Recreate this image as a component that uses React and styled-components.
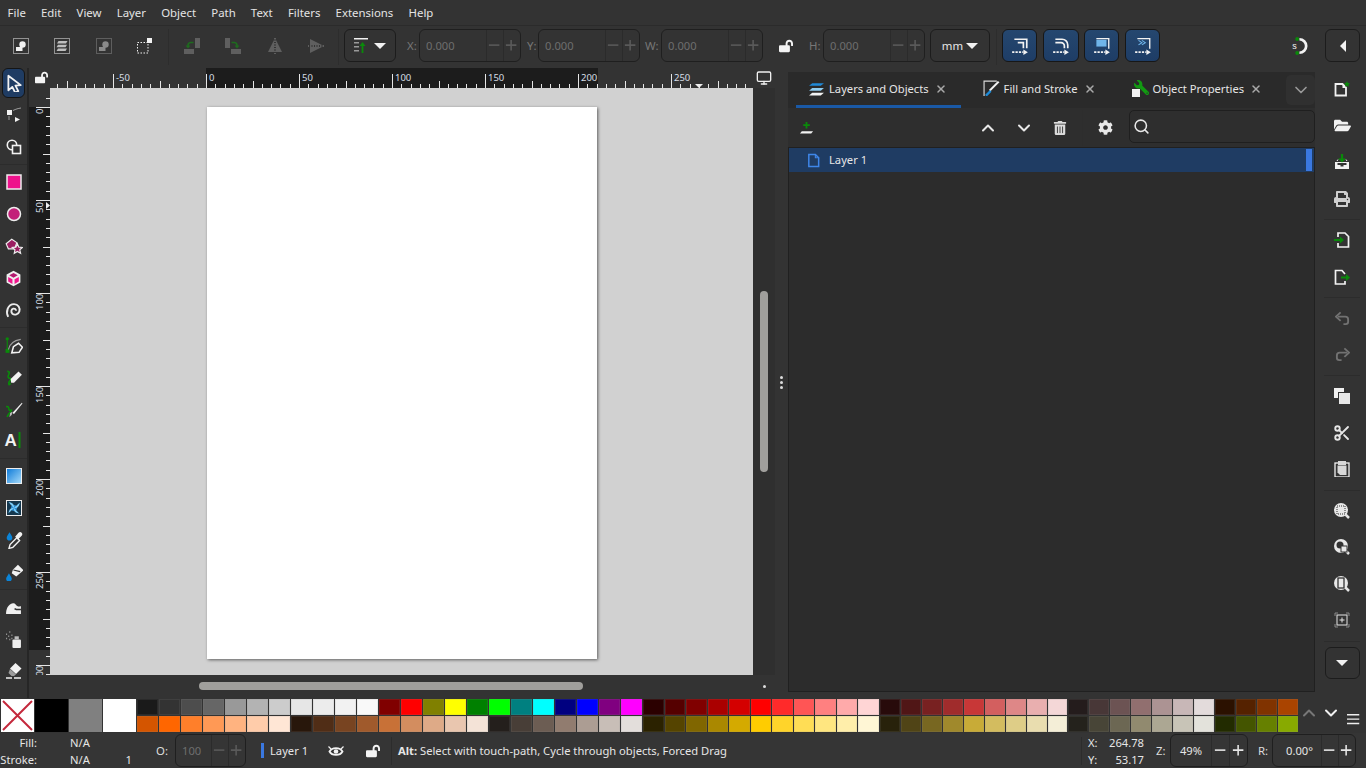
import React from 'react';
import styled, { createGlobalStyle } from 'styled-components';
import { FaCog, FaFolderOpen, FaLockOpen, FaPrint, FaTrashAlt, FaWrench } from 'react-icons/fa';
import { Monitor, Search, Scissors, ChevronUp, ChevronDown, X as XIcon } from 'lucide-react';

const W = '#f2f2f2';
const GREEN = '#0a8a0a';
const FONT = '"Noto Sans", "Open Sans", sans-serif';

const GlobalStyle = createGlobalStyle`
  html, body { margin: 0; padding: 0; background: #333; }
  body { font-family: ${FONT}; font-size: 12px; color: #e6e6e6; overflow: hidden; }
  * { box-sizing: border-box; }
`;

const Page = styled.div`
  width: 1366px;
  height: 768px;
  display: flex;
  flex-direction: column;
  background: #333;
  overflow: hidden;
`;

/* ---------- menu ---------- */
const MenuBar = styled.div`
  height: 26px;
  display: flex;
  align-items: center;
  padding: 0 0 1px 0;
  border-bottom: 1px solid #2b2b2b;
`;
const MenuItem = styled.span`
  padding: 0 7.6px;
  font-size: 11.4px;
  color: #e4e4e4;
`;

/* ---------- command bar ---------- */
const CommandBar = styled.div`
  height: 42px;
  display: flex;
  align-items: flex-start;
  padding-top: 3px;
`;
const BarBtn = styled.div`
  width: ${p => p.$w || 41.5}px;
  height: 33px;
  flex: none;
  display: flex;
  align-items: center;
  justify-content: center;
`;
const VSep = styled.div`
  width: 1px;
  height: 36px;
  flex: none;
  margin: ${p => p.$m || '0 1px'};
  background: #2d2d2d;
`;
const Field = styled.div`
  display: flex;
  align-items: center;
  height: 33px;
  flex: none;
  margin-left: ${p => p.$ml || 0}px;
`;
const FieldLabel = styled.span`
  width: ${p => p.$w}px;
  padding-left: ${p => p.$pl || 0}px;
  font-size: 11.4px;
  color: ${p => (p.$off ? '#777' : '#ddd')};
`;
const Spin = styled.div`
  width: ${p => p.$w}px;
  height: 33px;
  display: flex;
  align-items: stretch;
  border: 1px solid #1f1f1f;
  border-radius: 6px;
  color: ${p => (p.$off ? '#6e6e6e' : '#e6e6e6')};
`;
const SpinValue = styled.div`
  flex: 1;
  display: flex;
  align-items: center;
  justify-content: ${p => p.$align || 'flex-start'};
  padding: ${p => p.$pad || '0 0 0 6px'};
  font-size: 11.2px;
`;
const SpinStep = styled.div`
  width: ${p => p.$w || 17}px;
  border-left: 1px solid #2b2b2b;
  display: flex;
  align-items: center;
  justify-content: center;
  font-size: 0;
`;
const DropBtn = styled.div`
  width: ${p => p.$w}px;
  height: 33px;
  flex: none;
  margin-left: ${p => p.$ml || 0}px;
  margin-right: ${p => p.$mr || 0}px;
  display: flex;
  align-items: center;
  justify-content: center;
  gap: ${p => p.$gap || 3}px;
  border: 1px solid #1c1c1c;
  border-radius: 6px;
  font-size: 11.4px;
  color: #e6e6e6;
`;
const BlueBtn = styled.div`
  width: ${p => p.$w || 35}px;
  height: 33px;
  flex: none;
  margin-left: ${p => p.$ml || 6}px;
  display: flex;
  align-items: center;
  justify-content: center;
  border: 1px solid #171717;
  border-radius: 6px;
  background: linear-gradient(#25476f, #1e3d66);
`;
const Caret = styled.span`
  width: 0;
  height: 0;
  border-left: 6px solid transparent;
  border-right: 6px solid transparent;
  border-top: 6px solid #f2f2f2;
`;
const SideCaret = styled.span`
  width: 0;
  height: 0;
  border-top: 6px solid transparent;
  border-bottom: 6px solid transparent;
  border-right: 6px solid #f2f2f2;
`;
const Push = styled.div`
  margin-left: auto;
  display: flex;
  align-items: center;
  flex: none;
`;

/* ---------- middle ---------- */
const Middle = styled.div`
  height: 630px;
  display: flex;
`;
const LeftTools = styled.div`
  width: 29px;
  flex: none;
  display: flex;
  flex-direction: column;
  border-right: 2px solid #262626;
`;
const ToolSlot = styled.div`
  height: 32px;
  flex: none;
  display: flex;
  align-items: center;
  justify-content: center;
`;
const ActiveTool = styled(ToolSlot)`
  height: 30px;
  margin: 0 2px 1px 2px;
  border: 1px solid #151515;
  border-radius: 6px;
  background: #1f3c63;
`;
const ToolSep = styled.div`
  height: 1px;
  flex: none;
  margin: 1px 0;
  background: #2c2c2c;
`;
const CanvasArea = styled.div`
  display: grid;
  grid-template-columns: 21px 703px 22px;
  grid-template-rows: 20px 587px 23px;
  flex: none;
`;
const Corner = styled.div`
  display: flex;
  align-items: flex-start;
  justify-content: flex-end;
  padding: 3px 2px 0 0;
`;
const RulerSvg = styled.svg`
  display: block;
  font-family: ${FONT};
`;
const CanvasView = styled.div`
  background: #d1d1d1;
  overflow: hidden;
  padding: 19px 0 0 157px;
`;
const SheetPage = styled.div`
  width: 390px;
  height: 552px;
  background: #fff;
  box-shadow: 1px 1px 3px rgba(0, 0, 0, 0.55);
`;
const VScrollTop = styled.div`
  display: flex;
  align-items: center;
  justify-content: center;
  padding-bottom: 1px;
`;
const VScroll = styled.div`
  background: #2f2f2f;
  padding: 203px 7px 0 7px;
`;
const Thumb = styled.div`
  background: #a09f9c;
  border-radius: 4px;
  width: 8px;
  height: 181px;
`;
const HScroll = styled.div`
  padding: 7px 0 0 149px;
`;
const HThumb = styled.div`
  background: #a09f9c;
  border-radius: 4px;
  width: 384px;
  height: 8px;
`;
const ScrollCorner = styled.div`
  display: flex;
  justify-content: center;
  padding-top: 10px;
`;
const Dot = styled.div`
  width: 3px;
  height: 3px;
  border-radius: 2px;
  background: #ddd;
`;
const Handle = styled.div`
  width: 13px;
  flex: none;
  display: flex;
  flex-direction: column;
  align-items: center;
  justify-content: center;
  gap: 2px;
  margin-top: -1px;
`;

/* ---------- dock ---------- */
const Dock = styled.div`
  width: 527px;
  flex: none;
  height: 624px;
  padding-top: 4px;
  display: flex;
  flex-direction: column;
`;
const TabBar = styled.div`
  height: 36px;
  flex: none;
  display: flex;
  align-items: stretch;
  gap: 10px;
  padding-left: 8px;
  background: #2a2a2a;
`;
const Tab = styled.div`
  display: flex;
  flex: none;
  align-items: center;
  gap: 4px;
  padding: 0 14px 0 12px;
  height: 36px;
  font-size: 11.2px;
  white-space: nowrap;
  color: #e6e6e6;
  border-bottom: 3px solid ${p => (p.$active ? '#1a59a6' : 'transparent')};
`;
const TabClose = styled.span`
  display: flex;
  margin-left: 2px;
  color: #a9a9a9;
`;
const TabMore = styled.div`
  margin: 3px 0 3px auto;
  width: 30px;
  height: 30px;
  border-radius: 5px;
  background: #303030;
  display: flex;
  align-items: center;
  justify-content: center;
  color: #9a9a9a;
`;
const DockTools = styled.div`
  height: 39px;
  flex: none;
  display: flex;
  align-items: center;
  background: #2e2e2e;
`;
const DockBtn = styled.div`
  width: 36px;
  height: 36px;
  flex: none;
  margin-left: ${p => p.$ml || 0}px;
  display: flex;
  align-items: center;
  justify-content: center;
  color: #e8e8e8;
`;
const SearchBox = styled.div`
  width: 186px;
  height: 33px;
  margin: -2px 0 0 6px;
  display: flex;
  align-items: center;
  padding-left: 3px;
  border: 1px solid #1f1f1f;
  border-radius: 5px;
  color: #e8e8e8;
`;
const Tree = styled.div`
  flex: 1;
  background: #2c2c2c;
  border: 1px solid #202020;
`;
const TreeRow = styled.div`
  height: 24px;
  display: flex;
  align-items: center;
  gap: 8px;
  padding: 0 2px 0 17px;
  background: #1f3c63;
  font-size: 11.2px;
  color: #e6e6e6;
`;
const TreeLabel = styled.span`
  margin-top: -2px;
`;
const RowBar = styled.span`
  margin-left: auto;
  width: 6px;
  height: 22px;
  background: #3a78e0;
`;
const RightTools = styled.div`
  flex: 1;
  display: flex;
  flex-direction: column;
  align-items: center;
  padding: 3px 0 0 3px;
`;
const RightSlot = styled.div`
  height: 36.5px;
  flex: none;
  display: flex;
  align-items: center;
  justify-content: center;
  width: 100%;
  color: #e6e6e6;
`;
const RightSep = styled.div`
  width: 36px;
  height: 1px;
  margin: 2px 0;
  flex: none;
  background: #2c2c2c;
`;
const PagerBtn = styled.div`
  width: 35px;
  height: 32px;
  margin-top: 3px;
  border: 1px solid #1c1c1c;
  border-radius: 6px;
  display: flex;
  align-items: center;
  justify-content: center;
`;

/* ---------- palette ---------- */
const Palette = styled.div`
  height: 35px;
  flex: none;
  display: flex;
  padding: 1px 0 0 1px;
`;
const BigSwatch = styled.div`
  width: 33px;
  height: 33px;
  flex: none;
  margin-right: 1px;
  background: ${p => p.$c};
`;
const SwatchGrid = styled.div`
  width: 1162px;
  flex: none;
  display: grid;
  grid-template-columns: repeat(23, 21px) repeat(11, 20.55px) repeat(20, 19.95px);
  grid-template-rows: 16px 16px;
  column-gap: 1px;
  row-gap: 1px;
`;
const Swatch = styled.div`
  background: ${p => p.$c};
  box-shadow: inset 0 0 0 1px rgba(140, 140, 140, 0.14);
`;
const PaletteCtl = styled.div`
  flex: 1;
  display: flex;
  align-items: center;
  padding: 0 0 6px 0;
`;
const CtlBtn = styled.div`
  width: ${p => p.$w}px;
  flex: none;
  display: flex;
  justify-content: center;
  padding-top: ${p => p.$top || 0}px;
`;
const NoneMark = styled.svg`
  display: block;
`;

/* ---------- status ---------- */
const StatusBar = styled.div`
  height: 35px;
  flex: none;
  display: flex;
  align-items: center;
  background: #353535;
  font-size: 11.2px;
`;
const StyleInfo = styled.div`
  width: 133px;
  flex: none;
  display: grid;
  grid-template-columns: 37px 70px 26px;
  grid-template-rows: 17px 17px;
  align-items: center;
`;
const StyleLabel = styled.span`
  text-align: right;
`;
const StyleValue = styled.span`
  padding-left: 33px;
`;
const StyleWidth = styled.span`
  text-align: right;
  grid-column: 3;
  padding-right: 1px;
`;
const LayerBar = styled.span`
  width: 3px;
  height: 15px;
  flex: none;
  margin: 0 6px 0 15px;
  background: #3a78e0;
`;
const LayerName = styled.span`
  width: 37px;
  flex: none;
  white-space: nowrap;
`;
const StatusIcon = styled.div`
  width: ${p => p.$w}px;
  flex: none;
  display: flex;
  justify-content: center;
  color: #f0f0f0;
`;
const StatusSep = styled.div`
  width: 1px;
  height: 28px;
  flex: none;
  background: #2c2c2c;
  margin-left: ${p => p.$l || 0}px;
`;
const Message = styled.div`
  flex: none;
  margin-left: 6px;
  white-space: nowrap;
  b { font-weight: 700; }
`;
const Coords = styled.div`
  margin-left: auto;
  display: flex;
  align-items: center;
  padding-right: 10px;
`;
const CoordGrid = styled.div`
  width: 56px;
  flex: none;
  display: grid;
  grid-template-columns: 14px 42px;
  grid-template-rows: 17px 17px;
  align-items: center;
  margin-left: 6px;
`;
const CoordValue = styled.span`
  text-align: right;
`;
const PropsIcon = styled.div`
  position: relative;
  width: 17px;
  height: 17px;
  flex: none;
  svg { position: absolute; }
  svg:first-child { right: 0; top: 0; transform: scaleX(-1); }
  svg:last-child { left: 0; bottom: 0; }
`;

/* ---------- drawn icons ---------- */
const Svg = ({ s = 16, children, ...rest }) => (
  <svg width={s} height={s} viewBox="0 0 16 16" {...rest}>{children}</svg>
);
const Dotted = ({ c = W }) => (
  <rect x=".5" y=".5" width="15" height="15" fill="none" stroke={c} strokeDasharray="1 1" />
);
const SelectAll = ({ c = W }) => (
  <Svg><Dotted c={c} /><circle cx="9.5" cy="6.5" r="3.2" fill={c} /><rect x="3" y="9" width="6.5" height="4" fill={c} /></Svg>
);
const SelectLayers = () => (
  <Svg>
    <Dotted />
    <path d="M4.5 3h9L12 5.5H3zM4 6.8h9l-1.5 2.4h-9zM4 10.5h9L11.5 13h-9z" fill="#bdbdbd" />
  </Svg>
);
const SelectPage = () => (
  <Svg>
    <rect x=".5" y="4.5" width="10.5" height="10.5" fill="none" stroke={W} strokeDasharray="1.5 1.5" />
    <rect x="10" y="0" width="5" height="5" fill={W} />
  </Svg>
);
const RotateCcw = ({ flip }) => (
  <Svg transform={flip ? 'scale(-1 1)' : undefined}>
    <rect x="11" y="0" width="5" height="10" fill="#5f5f5f" />
    <rect x="0" y="11" width="10" height="5" fill="#5f5f5f" />
    <path d="M9.5 4.5h-3A3 3 0 0 0 4 7.5V9" fill="none" stroke="#1e6b1e" strokeWidth="1.6" />
    <path d="M1.5 7.5h5l-2.500 3z" fill="#1e6b1e" />
  </Svg>
);
const FlipH = ({ rot }) => (
  <Svg transform={rot ? 'rotate(90)' : undefined}>
    <path d="M7 2v12H1z" fill="#5f5f5f" />
    <path d="M9 2v12h6z" fill="#5f5f5f" />
    <path d="M8 0v16" stroke="#8a8a8a" strokeDasharray="1.5 1" />
  </Svg>
);
const RaiseIcon = () => (
  <Svg>
    <rect x="0" y="0" width="14" height="1.5" fill={W} />
    <rect x="0" y="4" width="5" height="1.5" fill="#9a9a9a" />
    <rect x="0" y="8" width="5" height="1.5" fill="#9a9a9a" />
    <rect x="0" y="12" width="5" height="1.5" fill="#9a9a9a" />
    <path d="M8.5 15V7" stroke={GREEN} strokeWidth="1.8" />
    <path d="M5.5 8h6l-3-4z" fill={GREEN} />
  </Svg>
);
const OpenLock = ({ s = 14 }) => <FaLockOpen size={s} color="#f4f4f4" />;
const BlueIcon = ({ variant }) => (
  <Svg s={18}>
    {variant === 0 && <path d="M3 2h11v8M6 5h5v5" fill="none" stroke={W} strokeWidth="1.5" />}
    {variant === 1 && <path d="M3 2h6a5 5 0 0 1 5 5v3M3 5h5a3 3 0 0 1 3 3v2" fill="none" stroke={W} strokeWidth="1.5" />}
    {variant === 2 && <>
      <rect x="3" y="2.5" width="9" height="6" fill="#6fb5ea" />
      <path d="M3 1.5h11v9" fill="none" stroke={W} strokeWidth="1.2" />
    </>}
    {variant === 3 && <>
      <path d="M4 3l3 2-3 2M7 3l3 2-3 2" fill="none" stroke="#6fb5ea" strokeWidth="1" />
      <path d="M3 1.5h11v9" fill="none" stroke={W} strokeWidth="1.2" />
    </>}
    <path d="M1 13.500h10" stroke={W} strokeWidth="1.5" strokeDasharray="2 1" />
    <path d="M11 11l4 2.500-4 2.500z" fill={W} />
  </Svg>
);
const SnapIcon = () => (
  <Svg s={18}>
    <path d="M7.500 2a6 6 0 0 1 0 12" fill="none" stroke={W} strokeWidth="2.400" />
    <circle cx="5.500" cy="1.800" r="1.700" fill={GREEN} />
    <circle cx="5.500" cy="14.200" r="1.700" fill={GREEN} />
    <text x="1" y="10.500" fontSize="8" fill={W} fontFamily="Liberation Sans">s</text>
  </Svg>
);
const Minus = ({ c }) => <Svg s={14}><path d="M1 7h12" stroke={c} strokeWidth="1.8" /></Svg>;
const Plus = ({ c }) => <Svg s={14}><path d="M1 7h12M7 1v12" stroke={c} strokeWidth="1.8" /></Svg>;

const Pointer = () => (
  <Svg s={18}><path d="M3 1.5v13l3.500-3 2.500 5 2.800-1.300-2.500-4.900 4.700-.4z" fill="none" stroke={W} strokeWidth="1.6" strokeLinejoin="round" /></Svg>
);
const NodeTool = () => (
  <Svg>
    <rect x="1" y="3" width="5" height="5" fill={W} />
    <path d="M3 13V9M7 3.500C10 2 12 1.500 15 1" stroke="#9c9c9c" fill="none" />
    <path d="M9 10l5 2.500-5 2.500z" fill={W} />
  </Svg>
);
const ShapeBuilder = () => (
  <Svg>
    <circle cx="6" cy="6" r="4.7" fill="none" stroke={W} strokeWidth="1.6" />
    <rect x="6.5" y="6.5" width="8" height="8" fill="#333" stroke={W} strokeWidth="1.6" />
  </Svg>
);
const RectTool = () => (
  <Svg><rect x="1" y="1" width="14" height="14" fill="#ee128c" stroke="#eee" strokeWidth="1.5" /></Svg>
);
const EllipseTool = () => (
  <Svg><circle cx="8" cy="8" r="6.5" fill="#c32079" stroke="#eee" strokeWidth="1.5" /></Svg>
);
const StarTool = () => (
  <Svg s={18}>
    <path d="M1 6l5-4 4.500 3-2 5.500H3z" fill="#9b1e62" stroke="#eee" />
    <path d="M11 6l1.300 3 3.200.3-2.400 2 .8 3.200-2.900-1.700-2.800 1.700.7-3.200-2.400-2 3.200-.3z" fill="#9b1e62" stroke="#eee" />
  </Svg>
);
const BoxTool = () => (
  <Svg s={17}>
    <path d="M8 .8l6.500 3.500v7.400L8 15.200l-6.500-3.500V4.300z" fill="#eee" />
    <path d="M8 2.800l4 2.200-4 2.200-4-2.200z" fill="#b3186e" />
    <path d="M3 6.500l4 2.300v4.400l-4-2.300zM13 6.500l-4 2.300v4.400l4-2.300z" fill="#f0148c" />
  </Svg>
);
const SpiralTool = () => (
  <Svg s={17}>
    <path d="M3 14C.5 9.500 2.500 2 8.500 2c4 0 6 3.500 5 7-.8 2.700-4.500 3.700-6.500 2-1.600-1.500-1.300-4 .8-4.700 1.300-.4 2.700.6 2.400 2"
      fill="none" stroke="#ececec" strokeWidth="1.8" />
  </Svg>
);
const PenTool = () => (
  <Svg s={18}>
    <path d="M2 2.500V13" stroke={GREEN} strokeWidth="1" />
    <circle cx="2" cy="2.500" r="1.5" fill={GREEN} />
    <rect x=".5" y="11.500" width="3.5" height="3.5" fill={GREEN} />
    <path d="M3 12C4 7 8 4 14 3" stroke="#9c9c9c" fill="none" />
    <path d="M6 15l1.500-5.500 4.500-3 3.500 3.500-3 4.500z" fill="none" stroke={W} strokeWidth="1.4" />
  </Svg>
);
const PencilTool = () => (
  <Svg s={18}>
    <path d="M2 3c5 0-2 5 2 6s-3 4 0 5" fill="none" stroke={GREEN} strokeWidth="1.4" />
    <path d="M3 15l2-1.500" stroke={GREEN} strokeWidth="2" />
    <path d="M5.500 13L5 9.800 12 3l3 3-7 7z" fill={W} />
  </Svg>
);
const BrushTool = () => (
  <Svg s={18}>
    <path d="M1 6c4-1 1 4 4 3s-3 4-3 6" fill="none" stroke={GREEN} strokeWidth="1.4" />
    <path d="M6 13l-2 2 .5-3.500 2-1z" fill="#bbb" />
    <path d="M6.500 11.500L15 2.500l.5.5L8 12.500z" fill={W} />
  </Svg>
);
const TextTool = () => (
  <Svg s={20} viewBox="0 0 20 20">
    <text x="0.5" y="15" fontFamily="Liberation Sans" fontWeight="700" fontSize="17" fill="#f2f2f2">A</text>
    <rect x="14.5" y="1" width="2" height="16" fill={GREEN} />
  </Svg>
);
const GradientTool = () => (
  <svg width="16" height="16" viewBox="0 0 16 16">
    <defs>
      <linearGradient id="grad-tool" x1="0" y1="0" x2="1" y2="1">
        <stop offset="0" stopColor="#0a78d8" />
        <stop offset="1" stopColor="#a8dcfa" />
      </linearGradient>
    </defs>
    <rect x=".5" y=".5" width="15" height="15" fill="url(#grad-tool)" stroke="#eee" />
  </svg>
);
const MeshTool = () => (
  <Svg>
    <rect x=".5" y=".5" width="15" height="15" fill="#15384f" stroke="#eee" />
    <circle cx="8" cy="8" r="3" fill="#2c8fd6" />
    <path d="M8 8C5 5 4 4 2.500 2 6 2.500 8.500 4 8 8zM8 8c3-3 3.500-3.500 6-5.500C13 6 12 8.500 8 8zM8 8c3 3 3.500 4 5.500 5.500C10 13 7.500 12 8 8zM8 8c-3 3-4 3.500-5.500 5.500C3 10 4 7.500 8 8z" fill="#7fcdf7" />
  </Svg>
);
const Dropper = () => (
  <Svg s={18}>
    <path d="M4 1C3 3 1.500 4.200 1.500 6a2.500 2.500 0 0 0 5 0C6.500 4.200 5 3 4 1z" fill="#0b84d8" />
    <path d="M3.500 15.500l1-3.500 6-6 2.500 2.500-6 6z" fill="none" stroke={W} strokeWidth="1.2" />
    <path d="M9 5l3-3.500c1-.8 2-.8 2.800 0s.8 1.800 0 2.800L11.500 7.500z" fill={W} />
  </Svg>
);
const Bucket = () => (
  <Svg s={18}>
    <path d="M7 6l4.500-4.500 5 5-6.500 5.500-4-3z" fill={W} />
    <path d="M7.500 6.200l6 1.500" stroke="#333" />
    <path d="M3.500 9C2.700 11 1 12.200 1 14a2.500 2.500 0 0 0 5 0c0-1.800-1.600-3-2.500-5z" fill="#0b84d8" />
  </Svg>
);
const TweakTool = () => (
  <Svg s={17}>
    <path d="M1 14c0-4 1.500-9 6.500-10 2-.4 2.500 1.500 4 2.500 1 .6 2.500.5 3.500.3V14z" fill="#f0f0f0" />
    <path d="M9 9c1.500 1 3.500 1.200 6 .8" stroke="#333" strokeWidth="1.4" fill="none" />
  </Svg>
);
const SprayTool = () => (
  <Svg s={17}>
    <rect x="7" y="8" width="8" height="8" rx="1" fill="#efefef" />
    <rect x="9" y="5" width="4" height="3" fill="#bdbdbd" />
    <path d="M1 3h1M4 1h1M3 5h1M6 4h1M1 7h1M4 8h1M6 7h1" stroke="#9a9a9a" strokeWidth="1.3" />
  </Svg>
);
const EraserTool = () => (
  <Svg>
    <path d="M9.500 0l6 5.500L10 11 4 5.500z" fill={W} />
    <path d="M4 6l6 5.500L8 13H5.500l-3-3z" fill="#9b9b9b" />
    <path d="M0 15h6M8 15h7" stroke={W} strokeWidth="1.3" />
  </Svg>
);
const LayersTab = () => (
  <Svg s={17}>
    <path d="M4 3h11l-3 2.500H1z" fill="#1f8ad8" />
    <path d="M4 7.500h11l-3 2.500H1z" fill="#8fcdf0" />
    <path d="M4 12h11l-3 2.500H1z" fill="#f2f2f2" />
  </Svg>
);
const FillTab = () => (
  <Svg s={17}>
    <path d="M13 1H1v14" fill="none" stroke="#d8d8d8" strokeWidth="1.1" />
    <path d="M15.500 2L7 10.500l-1.500-1L14 1z" fill={W} />
    <path d="M6.500 9.500L8 11l-4 4H2.500v-1.500z" fill="#1b8ad8" />
  </Svg>
);
const PropsTab = () => (
  <PropsIcon>
    <FaWrench size={15} color="#129a12" />
    <svg width="8" height="8" viewBox="0 0 8 8"><rect width="8" height="8" fill="#f2f2f2" /></svg>
  </PropsIcon>
);
const LayerAdd = () => (
  <Svg s={15}>
    <path d="M3 12h12l-2 2.500H1z" fill={W} />
    <path d="M8 2v7M4.500 5.500h7" stroke={GREEN} strokeWidth="2" />
  </Svg>
);
const DocIcon = ({ c = W }) => (
  <Svg s={15}>
    <path d="M3 1.500h7L13.500 5v9.500H3z" fill="none" stroke={c} strokeWidth="1.6" />
    <path d="M10 1v4h4" fill="none" stroke={c} strokeWidth="1.2" />
  </Svg>
);
const NewDoc = () => (
  <Svg>
    <path d="M1.500 3h7L12 6.500v8H1.500z" fill="none" stroke={W} strokeWidth="1.8" />
    <path d="M8.500 3v4h4z" fill={W} />
    <path d="M13 0l.9 1.900 2.100.2-1.500 1.500.4 2.100-1.900-1-1.900 1 .4-2.100L10 2.100l2.100-.2z" fill={GREEN} />
  </Svg>
);
const SaveIcon = () => (
  <Svg>
    <path d="M1 8h14v7H1z" fill={W} />
    <path d="M3.500 9h9v2h-3v1.500h-3V11h-3z" fill="#333" />
    <path d="M3 7l1-1.500M13 7l-1-1.500" stroke={W} />
    <path d="M8 0v6" stroke={GREEN} strokeWidth="2.2" />
    <path d="M4 4.500h8l-4 4z" fill={GREEN} />
  </Svg>
);
const ImportIcon = () => (
  <Svg>
    <path d="M4 5V1h7l3.500 3.500V15H4v-4" fill="none" stroke={W} strokeWidth="1.7" />
    <path d="M0 8h7" stroke={GREEN} strokeWidth="2" />
    <path d="M6 4.500L10 8l-4 3.500z" fill={GREEN} />
  </Svg>
);
const ExportIcon = () => (
  <Svg>
    <path d="M11 5L8 1.500H1.500V15H11v-3" fill="none" stroke={W} strokeWidth="1.7" />
    <path d="M7 8.500h6" stroke={GREEN} strokeWidth="2" />
    <path d="M12 5l4 3.500-4 3.500z" fill={GREEN} />
  </Svg>
);
const UndoIcon = ({ flip }) => (
  <Svg s={15} transform={flip ? 'scale(-1 1)' : undefined}>
    <path d="M3 6h8a3 3 0 0 1 3 3v2.500a2.500 2.500 0 0 1-2.500 2.500H9" fill="none" stroke="#727272" strokeWidth="2" />
    <path d="M6 1.500L1 6l5 4.500" fill="none" stroke="#727272" strokeWidth="2" />
  </Svg>
);
const DuplicateIcon = () => (
  <Svg>
    <rect x="0" y="0" width="10" height="10" fill="#f0f0f0" />
    <rect x="4" y="4" width="12" height="12" fill="#333" />
    <rect x="5" y="5" width="11" height="11" fill="#e8e8e8" />
  </Svg>
);
const PasteIcon = () => (
  <Svg>
    <rect x="1" y="2" width="14" height="14" fill="none" stroke={W} strokeWidth="1.3" />
    <rect x="4" y="0" width="8" height="4" fill="#d8d8d8" />
    <path d="M3.500 4.500h9V14H6l-2.500-2.500z" fill="#d8d8d8" />
  </Svg>
);
const ZoomBase = ({ children }) => (
  <Svg>
    <path d="M11 11l4 4" stroke="#e6e6e6" strokeWidth="2.5" />
    <circle cx="7" cy="7" r="7" fill="#e8e8e8" />
    {children}
  </Svg>
);
const ZoomSel = () => (
  <ZoomBase><rect x="3" y="3" width="8" height="8" fill="#e8e8e8" stroke="#333" strokeDasharray="1 1" /></ZoomBase>
);
const ZoomDraw = () => (
  <ZoomBase><circle cx="6" cy="6" r="3.5" fill="#333" /><rect x="7" y="7" width="6" height="6" fill="#e8e8e8" stroke="#333" /></ZoomBase>
);
const ZoomPage = () => (
  <ZoomBase><rect x="4" y="2" width="6" height="10" fill="#e8e8e8" stroke="#333" strokeWidth="1.3" /></ZoomBase>
);
const ZoomCenter = () => (
  <Svg>
    <path d="M1 4V1h3M12 1h3v3M15 12v3h-3M4 15H1v-3" fill="none" stroke="#8a8a8a" />
    <rect x="3" y="3" width="10" height="10" fill="none" stroke="#e6e6e6" />
    <path d="M5.500 8h5M8 5.500v5" stroke="#e6e6e6" />
  </Svg>
);
const EyeIcon = () => (
  <Svg>
    <path d="M1.500 8.500C4 4 12 4 14.500 8.500 12 13 4 13 1.500 8.500z" fill="none" stroke="#f2f2f2" strokeWidth="1.8" />
    <circle cx="8" cy="8.500" r="2.300" fill="#f2f2f2" />
    <path d="M.5 3.500l2.500 2.500M15.500 3.500L13 6" stroke="#f2f2f2" strokeWidth="1.2" />
  </Svg>
);
const Menu3 = () => (
  <Svg s={14}><path d="M0 2h14M0 7h14M0 12h14" stroke="#eee" strokeWidth="1.7" /></Svg>
);

/* ---------- rulers ---------- */
const SCALE = 1.86;
const range = (a, b, s) => {
  const out = [];
  for (let v = a; v <= b; v += s) out.push(v);
  return out;
};

const HRuler = () => (
  <RulerSvg width="703" height="20">
    <rect width="703" height="20" fill="#333" />
    <rect x="156" width="392" height="20" fill="#1c1c1c" />
    {range(-80, 295, 5).map(u => {
      const x = Math.round(156 + u * SCALE) + 0.5;
      const top = u % 50 === 0 ? 6 : u % 25 === 0 ? 13 : 16;
      return <line key={u} x1={x} x2={x} y1={top} y2="20" stroke="#e6e6e6" />;
    })}
    {range(-50, 250, 50).map(u => (
      <text key={u} x={156 + u * SCALE + 3} y="13" fontSize="9.5" fill="#d6dee6">{u}</text>
    ))}
    <path d="M645 16h8l-4 4z" fill="#eee" />
  </RulerSvg>
);

const VRuler = () => (
  <RulerSvg width="21" height="587">
    <rect width="21" height="587" fill="#333" />
    <rect y="19" width="21" height="543" fill="#1c1c1c" />
    {range(-5, 305, 5).map(u => {
      const y = Math.round(19 + u * SCALE) + 0.5;
      const left = u % 50 === 0 ? 7 : u % 25 === 0 ? 14 : 17;
      return <line key={u} y1={y} y2={y} x1={left} x2="21" stroke="#e6e6e6" />;
    })}
    {range(0, 300, 50).map(u => (
      <text key={u} fontSize="9.5" fill="#d6dee6"
        transform={`translate(14 ${19 + u * SCALE + (u === 0 ? 7 : u < 100 ? 13 : 17)}) rotate(-90)`}>{u}</text>
    ))}
    <path d="M17 114l4 3.500-4 3.500z" fill="#eee" />
  </RulerSvg>
);

/* ---------- data ---------- */
const TOP_COLORS = ['#1a1a1a', '#333333', '#4d4d4d', '#666666', '#999999', '#b3b3b3', '#cccccc', '#e6e6e6', '#ececec', '#f2f2f2', '#f9f9f9',
  '#800000', '#ff0000', '#808000', '#ffff00', '#008000', '#00ff00', '#008080', '#00ffff', '#000080', '#0000ff', '#800080', '#ff00ff',
  '#2b0000', '#550000', '#800000', '#aa0000', '#d40000', '#ff0000', '#ff2a2a', '#ff5555', '#ff8080', '#ffaaaa', '#ffd5d5',
  '#280b0b', '#501616', '#782121', '#a02c2c', '#c83737', '#d35f5f', '#de8787', '#e9afaf', '#f4d7d7',
  '#241c1c', '#483737', '#6c5353', '#916f6f', '#ac9393', '#c8b7b7', '#e3dbdb',
  '#2b1100', '#552200', '#803300', '#aa4400'];
const BOTTOM_COLORS = ['#d45500', '#ff6600', '#ff7f2a', '#ff9955', '#ffb380', '#ffccaa', '#ffe6d5',
  '#28170b', '#502d16', '#784421', '#a05a2c', '#c87137', '#d38d5f', '#deaa87', '#e9c6af', '#f4e3d7',
  '#241f1c', '#483e37', '#6c5d53', '#917c6f', '#ac9d93', '#c8beb7', '#e3dedb',
  '#2b2200', '#554400', '#806600', '#aa8800', '#d4aa00', '#ffcc00', '#ffd42a', '#ffdd55', '#ffe680', '#ffeeaa', '#fff6d5',
  '#28220b', '#504416', '#786721', '#a0892c', '#c8ab37', '#d3bc5f', '#decd87', '#e9ddaf', '#f4eed7',
  '#24221c', '#484537', '#6c6753', '#918a6f', '#aca793', '#c8c4b7', '#e3e2db',
  '#222b00', '#445500', '#668000', '#88aa00'];

const MENU = ['File', 'Edit', 'View', 'Layer', 'Object', 'Path', 'Text', 'Filters', 'Extensions', 'Help'];

const SpinBox = ({ value, off, w, stepW, align, pad }) => {
  const c = off ? '#5a5a5a' : '#e6e6e6';
  return (
    <Spin $w={w} $off={off}>
      <SpinValue $align={align} $pad={pad}>{value}</SpinValue>
      <SpinStep $w={stepW}><Minus c={c} /></SpinStep>
      <SpinStep $w={stepW}><Plus c={c} /></SpinStep>
    </Spin>
  );
};

const TOOL_GROUPS = [
  [<NodeTool />, <ShapeBuilder />],
  [<RectTool />, <EllipseTool />, <StarTool />, <BoxTool />, <SpiralTool />],
  [<PenTool />, <PencilTool />, <BrushTool />, <TextTool />],
  [<GradientTool />, <MeshTool />, <Dropper />, <Bucket />],
  [<TweakTool />, <SprayTool />, <EraserTool />],
];

const RIGHT_GROUPS = [
  [<NewDoc />, <FaFolderOpen size={17} color={W} />, <SaveIcon />, <FaPrint size={16} color="#cfcfcf" />],
  [<ImportIcon />, <ExportIcon />],
  [<UndoIcon />, <UndoIcon flip />],
  [<DuplicateIcon />, <Scissors size={18} strokeWidth={2.5} color="#e6e6e6" />, <PasteIcon />],
  [<ZoomSel />, <ZoomDraw />, <ZoomPage />, <ZoomCenter />],
];

const TabX = () => <TabClose><XIcon size={12} strokeWidth={3} /></TabClose>;

export default function App() {
  return (
    <Page>
      <GlobalStyle />
      <MenuBar>
        {MENU.map(m => <MenuItem key={m}>{m}</MenuItem>)}
      </MenuBar>

      <CommandBar>
        <BarBtn><SelectAll /></BarBtn>
        <BarBtn><SelectLayers /></BarBtn>
        <BarBtn><SelectAll c="#8a8a8a" /></BarBtn>
        <BarBtn><SelectPage /></BarBtn>
        <VSep $m="0 2px" />
        <BarBtn><RotateCcw /></BarBtn>
        <BarBtn><RotateCcw flip /></BarBtn>
        <BarBtn><FlipH /></BarBtn>
        <BarBtn><FlipH rot /></BarBtn>
        <VSep />
        <DropBtn $w={52} $ml={4} $gap={4}><RaiseIcon /><Caret /></DropBtn>
        <Field $ml={10}><FieldLabel $w={13} $pl={1} $off>X:</FieldLabel><SpinBox value="0.000" off w={102} /></Field>
        <Field $ml={5}><FieldLabel $w={12} $pl={1} $off>Y:</FieldLabel><SpinBox value="0.000" off w={102} /></Field>
        <Field $ml={5}><FieldLabel $w={16} $off>W:</FieldLabel><SpinBox value="0.000" off w={102} /></Field>
        <BarBtn $w={46}><OpenLock /></BarBtn>
        <Field><FieldLabel $w={14} $off>H:</FieldLabel><SpinBox value="0.000" off w={102} /></Field>
        <DropBtn $w={60} $ml={5}>mm <Caret /></DropBtn>
        <VSep $m="0 0 0 6px" />
        <BlueBtn $ml={5}><BlueIcon variant={0} /></BlueBtn>
        <BlueBtn $w={36}><BlueIcon variant={1} /></BlueBtn>
        <BlueBtn $ml={5}><BlueIcon variant={2} /></BlueBtn>
        <BlueBtn><BlueIcon variant={3} /></BlueBtn>
        <Push>
          <SnapIcon />
          <DropBtn $w={35} $ml={16} $mr={6}><SideCaret /></DropBtn>
        </Push>
      </CommandBar>

      <Middle>
        <LeftTools>
          <ActiveTool><Pointer /></ActiveTool>
          {TOOL_GROUPS.map((group, i) => (
            <React.Fragment key={i}>
              {i > 0 && <ToolSep />}
              {group.map((icon, j) => <ToolSlot key={j}>{icon}</ToolSlot>)}
            </React.Fragment>
          ))}
        </LeftTools>

        <CanvasArea>
          <Corner><OpenLock s={13} /></Corner>
          <HRuler />
          <VScrollTop><Monitor size={16} color="#f0f0f0" /></VScrollTop>
          <VRuler />
          <CanvasView><SheetPage /></CanvasView>
          <VScroll><Thumb /></VScroll>
          <div />
          <HScroll><HThumb /></HScroll>
          <ScrollCorner><Dot /></ScrollCorner>
        </CanvasArea>

        <Handle><Dot /><Dot /><Dot /></Handle>

        <Dock>
          <TabBar>
            <Tab $active><LayersTab /><span>Layers and Objects</span><TabX /></Tab>
            <Tab><FillTab /><span>Fill and Stroke</span><TabX /></Tab>
            <Tab><PropsTab /><span>Object Properties</span><TabX /></Tab>
            <TabMore><ChevronDown size={20} /></TabMore>
          </TabBar>
          <DockTools>
            <DockBtn><LayerAdd /></DockBtn>
            <DockBtn $ml={146}><ChevronUp size={20} strokeWidth={2.4} /></DockBtn>
            <DockBtn><ChevronDown size={20} strokeWidth={2.4} /></DockBtn>
            <DockBtn><FaTrashAlt size={14} color="#dcdcdc" /></DockBtn>
            <VSep $m="0 4px" />
            <DockBtn><FaCog size={15} /></DockBtn>
            <SearchBox><Search size={17} strokeWidth={2.2} /></SearchBox>
          </DockTools>
          <Tree>
            <TreeRow>
              <DocIcon c="#3f86e8" />
              <TreeLabel>Layer 1</TreeLabel>
              <RowBar />
            </TreeRow>
          </Tree>
        </Dock>

        <RightTools>
          {RIGHT_GROUPS.map((group, i) => (
            <React.Fragment key={i}>
              {i > 0 && <RightSep />}
              {group.map((icon, j) => <RightSlot key={j}>{icon}</RightSlot>)}
            </React.Fragment>
          ))}
          <RightSep />
          <PagerBtn><Caret /></PagerBtn>
        </RightTools>
      </Middle>

      <Palette>
        <BigSwatch $c="#fff">
          <NoneMark width="33" height="33" viewBox="0 0 33 33"><path d="M2 2l29 29M31 2L2 31" stroke="#c4283c" strokeWidth="2" /></NoneMark>
        </BigSwatch>
        <BigSwatch $c="#000" />
        <BigSwatch $c="#808080" />
        <BigSwatch $c="#fff" />
        <SwatchGrid>
          {TOP_COLORS.map((c, i) => <Swatch key={i} $c={c} />)}
          {BOTTOM_COLORS.map((c, i) => <Swatch key={i} $c={c} />)}
        </SwatchGrid>
        <PaletteCtl>
          <CtlBtn $w={20}><ChevronUp size={20} color="#777" strokeWidth={2.4} /></CtlBtn>
          <CtlBtn $w={24}><ChevronDown size={20} color="#f0f0f0" strokeWidth={2.4} /></CtlBtn>
          <CtlBtn $w={22} $top={14}><Menu3 /></CtlBtn>
        </PaletteCtl>
      </Palette>

      <StatusBar>
        <StyleInfo>
          <StyleLabel>Fill:</StyleLabel>
          <StyleValue>N/A</StyleValue>
          <span />
          <StyleLabel>Stroke:</StyleLabel>
          <StyleValue>N/A</StyleValue>
          <StyleWidth>1</StyleWidth>
        </StyleInfo>
        <Field $ml={23}><FieldLabel $w={19}>O:</FieldLabel><SpinBox value="100" off w={71} stepW={17} /></Field>
        <LayerBar />
        <LayerName>Layer 1</LayerName>
        <StatusIcon $w={58}><EyeIcon /></StatusIcon>
        <StatusIcon $w={16}><OpenLock s={14} /></StatusIcon>
        <StatusSep $l={10} />
        <Message><b>Alt:</b> Select with touch-path, Cycle through objects, Forced Drag</Message>
        <Coords>
          <StatusSep />
          <CoordGrid>
            <span>X:</span><CoordValue>264.78</CoordValue>
            <span>Y:</span><CoordValue>53.17</CoordValue>
          </CoordGrid>
          <Field $ml={12}><FieldLabel $w={14}>Z:</FieldLabel><SpinBox value="49%" w={78} stepW={18} align="center" pad="0" /></Field>
          <Field $ml={10}><FieldLabel $w={14}>R:</FieldLabel><SpinBox value="0.00°" w={84} stepW={17} align="flex-end" pad="0 8px 0 0" /></Field>
        </Coords>
      </StatusBar>
    </Page>
  );
}
